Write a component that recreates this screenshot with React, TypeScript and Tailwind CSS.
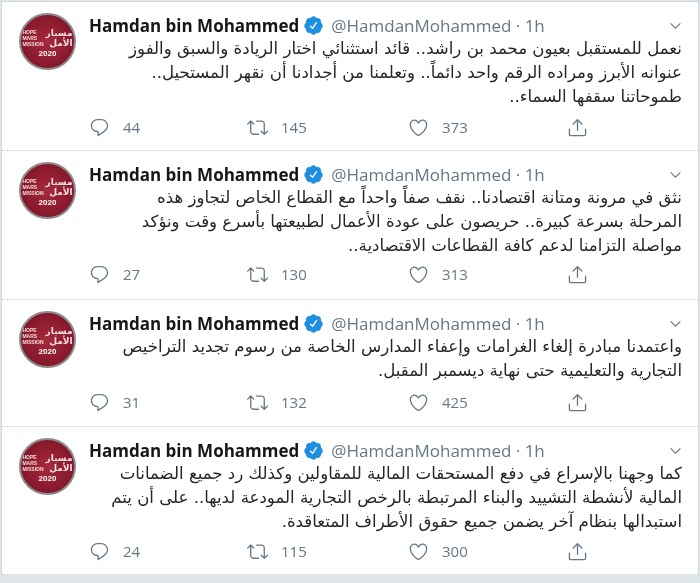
import React from 'react'

const tweets = [
  {
    lines: [
      'نعمل للمستقبل بعيون محمد بن راشد.. قائد استثنائي اختار الريادة والسبق والفوز',
      'عنوانه الأبرز ومراده الرقم واحد دائماً.. وتعلمنا من أجدادنا أن نقهر المستحيل..',
      'طموحاتنا سقفها السماء..',
    ],
    replies: 44,
    retweets: 145,
    likes: 373,
    height: 'h-[149px]',
    actionGap: 'mb-[12px]',
  },
  {
    lines: [
      'نثق في مرونة ومتانة اقتصادنا.. نقف صفاً واحداً مع القطاع الخاص لتجاوز هذه',
      'المرحلة بسرعة كبيرة.. حريصون على عودة الأعمال لطبيعتها بأسرع وقت ونؤكد',
      'مواصلة التزامنا لدعم كافة القطاعات الاقتصادية..',
    ],
    replies: 27,
    retweets: 130,
    likes: 313,
    height: 'h-[149px]',
    actionGap: 'mb-[14px]',
  },
  {
    lines: [
      'واعتمدنا مبادرة إلغاء الغرامات وإعفاء المدارس الخاصة من رسوم تجديد التراخيص',
      'التجارية والتعليمية حتى نهاية ديسمبر المقبل.',
    ],
    replies: 31,
    retweets: 132,
    likes: 425,
    height: 'h-[127px]',
    actionGap: 'mb-[13px]',
  },
  {
    lines: [
      'كما وجهنا بالإسراع في دفع المستحقات المالية للمقاولين وكذلك رد جميع الضمانات',
      'المالية لأنشطة التشييد والبناء المرتبطة بالرخص التجارية المودعة لديها.. على أن يتم',
      'استبدالها بنظام آخر يضمن جميع حقوق الأطراف المتعاقدة.',
    ],
    replies: 24,
    retweets: 115,
    likes: 300,
    height: 'h-[148px]',
    actionGap: 'mb-[12px]',
  },
]

const Avatar = () => (
  <div className="w-[57px] h-[57px] rounded-full bg-[radial-gradient(circle,#a52a3c_0%,#8a1a2d_60%,#6e1424_100%)] border-[2px] border-[#8f8a8a] flex flex-col items-center justify-center text-white font-bold overflow-hidden">
    <div className="flex items-center gap-[2px] mt-[3px]">
      <div className="text-[5px] leading-[6px] text-[#f3d9dc] font-['Liberation_Sans',sans-serif]">
        HOPE
        <br />
        MARS
        <br />
        MISSION
      </div>
      <div dir="rtl" className="text-[9px] leading-[10px] font-['DejaVu_Sans',sans-serif] text-[#f6dfe2]">
        مسبار
        <br />
        الأمل
      </div>
    </div>
    <div className="text-[8px] leading-[11px] font-['Liberation_Sans',sans-serif]">2020</div>
  </div>
)

const Action = ({ d, count, className }: { d: string; count?: number; className: string }) => (
  <div className={`flex items-center gap-[13px] text-[#657786] ${className}`}>
    <svg viewBox="0 0 24 24" className="w-[21px] h-[21px] fill-current">
      <path d={d} />
    </svg>
    {count !== undefined && <span className="text-[15px] leading-none">{count}</span>}
  </div>
)

const replyIcon =
  'M14.046 2.242l-4.148-.01h-.002c-4.374 0-7.8 3.427-7.8 7.802 0 4.098 3.186 7.206 7.465 7.37v3.828c0 .108.044.286.12.403.142.225.384.347.632.347.138 0 .277-.038.402-.118.264-.168 6.473-4.14 8.088-5.506 1.902-1.61 3.04-3.97 3.043-6.312v-.017c-.006-4.367-3.43-7.787-7.8-7.788zm3.787 12.972c-1.134.96-4.862 3.405-6.772 4.643V16.67c0-.414-.335-.75-.75-.75h-.396c-3.66 0-6.318-2.476-6.318-5.886 0-3.534 2.768-6.302 6.3-6.302l4.147.01h.002c3.532 0 6.3 2.766 6.302 6.296-.003 1.91-.942 3.844-2.514 5.176z'
const retweetIcon =
  'M23.77 15.67c-.292-.293-.767-.293-1.06 0l-2.22 2.22V7.65c0-2.068-1.683-3.75-3.75-3.75h-5.85c-.414 0-.75.336-.75.75s.336.75.75.75h5.85c1.24 0 2.25 1.01 2.25 2.25v10.24l-2.22-2.22c-.293-.293-.768-.293-1.06 0s-.294.768 0 1.06l3.5 3.5c.145.147.337.22.53.22s.383-.072.53-.22l3.5-3.5c.294-.292.294-.767 0-1.06zm-10.66 3.28H7.26c-1.24 0-2.25-1.01-2.25-2.25V6.46l2.22 2.22c.148.147.34.22.532.22s.384-.073.53-.22c.293-.293.293-.768 0-1.06l-3.5-3.5c-.293-.294-.768-.294-1.06 0l-3.5 3.5c-.294.292-.294.767 0 1.06s.767.293 1.06 0l2.22-2.22V16.7c0 2.068 1.683 3.75 3.75 3.75h5.85c.414 0 .75-.336.75-.75s-.337-.75-.75-.75z'
const likeIcon =
  'M12 21.638h-.014C9.403 21.59 1.95 14.856 1.95 8.478c0-3.064 2.525-5.754 5.403-5.754 2.29 0 3.83 1.58 4.646 2.73.814-1.148 2.354-2.73 4.645-2.73 2.88 0 5.404 2.69 5.404 5.755 0 6.376-7.454 13.11-10.037 13.157H12zM7.354 4.225c-2.08 0-3.903 1.988-3.903 4.255 0 5.74 7.034 11.596 8.55 11.658 1.518-.062 8.55-5.917 8.55-11.658 0-2.267-1.823-4.255-3.903-4.255-2.528 0-3.94 2.936-3.952 2.965-.23.562-1.156.562-1.387 0-.014-.03-1.425-2.965-3.954-2.965z'
const shareIcon =
  'M17.53 7.47l-5-5c-.293-.293-.768-.293-1.06 0l-5 5c-.294.293-.294.768 0 1.06s.767.294 1.06 0l3.72-3.72V15c0 .414.336.75.75.75s.75-.336.75-.75V4.81l3.72 3.72c.146.147.338.22.53.22s.384-.072.53-.22c.293-.293.293-.767 0-1.06zM19.708 21.944H4.292C3.028 21.944 2 20.916 2 19.652V14c0-.414.336-.75.75-.75s.75.336.75.75v5.652c0 .437.355.792.792.792h15.416c.437 0 .792-.355.792-.792V14c0-.414.336-.75.75-.75s.75.336.75.75v5.652c0 1.264-1.028 2.292-2.292 2.292z'

const Tweet = ({ tweet }: { tweet: (typeof tweets)[number] }) => (
  <div className={`flex bg-white border-b border-dotted border-[#c6ccd0] pl-[17px] pr-[16px] ${tweet.height}`}>
    <div className="w-[70px] shrink-0 pt-[11px]">
      <Avatar />
    </div>
    <div className="flex-1 flex flex-col pt-[11px]">
      <div className="flex items-center h-[24px] text-[17px] leading-none font-['Open_Sans',sans-serif]">
        <span className="font-bold text-[#14171a]">Hamdan bin Mohammed</span>
        <svg viewBox="0 0 24 24" className="w-[21px] h-[21px] ml-[4px] text-[#1d8fe0] fill-current">
          <path d="M22.5 12.5c0-1.58-.875-2.95-2.148-3.6.154-.435.238-.905.238-1.4 0-2.21-1.71-3.998-3.818-3.998-.47 0-.92.084-1.336.25C14.818 2.415 13.51 1.5 12 1.5s-2.816.917-3.437 2.25c-.415-.165-.866-.25-1.336-.25-2.11 0-3.818 1.79-3.818 4 0 .494.083.964.237 1.4-1.272.65-2.147 2.018-2.147 3.6 0 1.495.782 2.798 1.942 3.486-.02.17-.032.34-.032.514 0 2.21 1.708 4 3.818 4 .47 0 .92-.086 1.335-.25.62 1.334 1.926 2.25 3.437 2.25 1.512 0 2.818-.916 3.437-2.25.415.163.865.248 1.336.248 2.11 0 3.818-1.79 3.818-4 0-.174-.012-.344-.033-.513 1.158-.687 1.943-1.99 1.943-3.484zm-6.616-3.334l-4.334 6.5c-.145.217-.382.334-.625.334-.143 0-.288-.04-.416-.126l-.115-.094-2.415-2.415c-.293-.293-.293-.768 0-1.06s.768-.294 1.06 0l1.77 1.767 3.825-5.74c.23-.345.696-.436 1.04-.207.346.23.44.696.21 1.04z" />
        </svg>
        <span className="ml-[7px] text-[#657786]">@HamdanMohammed · 1h</span>
        <svg viewBox="0 0 24 24" className="ml-auto w-[13px] h-[13px] fill-none stroke-[#657786] stroke-[2]">
          <path d="M3 8l9 9 9-9" />
        </svg>
      </div>
      <div dir="rtl" className="font-['DejaVu_Sans',sans-serif] text-[16.6px] leading-[24px] text-[#23272b] whitespace-nowrap">
        {tweet.lines.map((line) => (
          <div key={line}>{line}</div>
        ))}
      </div>
      <div className={`mt-auto flex items-center ${tweet.actionGap}`}>
        <Action d={replyIcon} count={tweet.replies} className="w-[158px]" />
        <Action d={retweetIcon} count={tweet.retweets} className="w-[161px]" />
        <Action d={likeIcon} count={tweet.likes} className="w-[159px]" />
        <Action d={shareIcon} className="" />
      </div>
    </div>
  </div>
)

export default function App() {
  return (
    <div className="w-[700px] h-[583px] overflow-hidden bg-[#dfe6ea] font-['Open_Sans',sans-serif] px-[1px] pt-[1px] blur-[0.4px]">
      <div className="border-x border-t border-dotted border-[#c6ccd0]">
        {tweets.map((tweet) => (
          <Tweet key={tweet.replies} tweet={tweet} />
        ))}
      </div>
    </div>
  )
}
